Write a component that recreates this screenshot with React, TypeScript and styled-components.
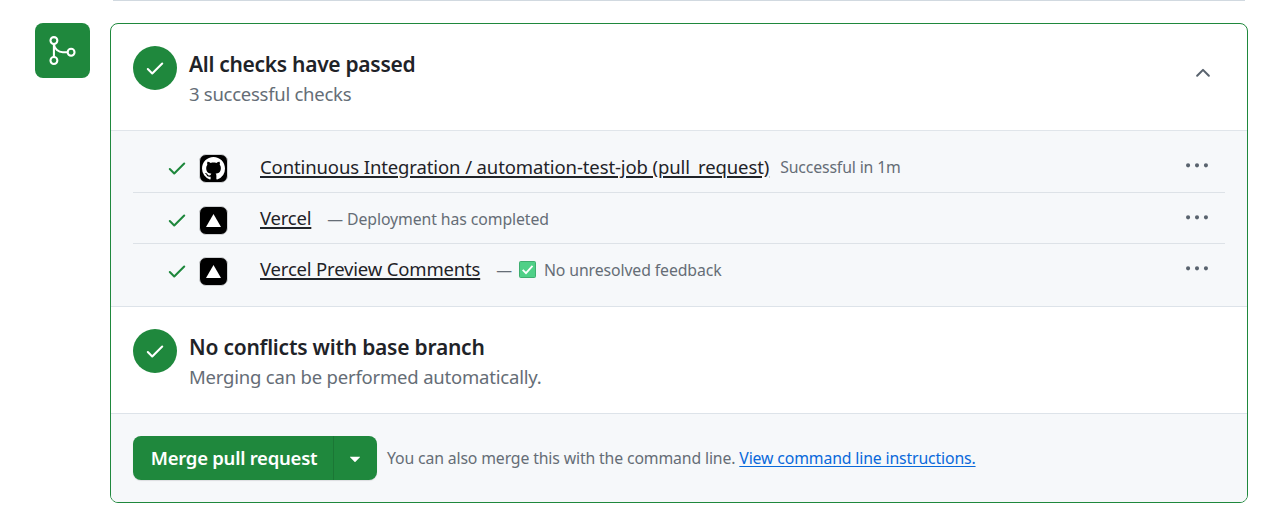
import React from "react";
import styled, { createGlobalStyle } from "styled-components";

const GlobalStyle = createGlobalStyle`
  * { box-sizing: border-box; }
  body {
    margin: 0;
    background: #fff;
    color: #1f2328;
    font-family: "Noto Sans", "Open Sans", sans-serif;
    overflow: hidden;
  }
  svg { display: block; flex: none; }
`;

const Page = styled.main`
  width: 1280px;
  height: 522px;
  display: flex;
  flex-direction: column;
`;

const PreviousCardEdge = styled.div`
  height: 1px;
  margin: 0 35px 0 113px;
  background: #d1d9e0;
`;

const MergeArea = styled.section`
  display: flex;
  align-items: flex-start;
  gap: 20px;
  padding: 22px 32px 0 35px;
`;

const MergeBadge = styled.div`
  width: 55px;
  height: 55px;
  border-radius: 8px;
  background: #1f883d;
  color: #fff;
  display: grid;
  place-items: center;
  flex: none;
`;

const Card = styled.div`
  flex: 1;
  height: 480px;
  border: 1px solid #1f883d;
  border-radius: 8px;
  overflow: hidden;
  background: #fff;
`;

const Status = styled.header<{ $height: number }>`
  display: flex;
  align-items: flex-start;
  height: ${(p) => p.$height}px;
  padding: 22px 33px 0 22px;
`;

const StatusCircle = styled.div`
  width: 44px;
  height: 44px;
  border-radius: 50%;
  background: #1f883d;
  color: #fff;
  display: grid;
  place-items: center;
  flex: none;
`;

const StatusText = styled.div`
  flex: 1;
  padding-left: 12px;
`;

const Title = styled.h3<{ $spacing: number }>`
  margin: 3px 0 0;
  font-size: 21px;
  font-weight: 600;
  line-height: 30px;
  letter-spacing: ${(p) => p.$spacing}px;
`;

const Subtitle = styled.p<{ $spacing: number }>`
  margin: 0;
  color: #656d76;
  font-size: 18.5px;
  line-height: 30px;
  letter-spacing: ${(p) => p.$spacing}px;
`;

const CollapseButton = styled.button`
  margin-top: 16px;
  padding: 0;
  border: 0;
  background: none;
  color: #59636e;
`;

const Checks = styled.ul`
  list-style: none;
  margin: 0;
  height: 177px;
  padding: 10px 22px 0;
  background: #f6f8fa;
  border-top: 1px solid #e0e5ea;
  border-bottom: 1px solid #dde3e9;
`;

const CheckRow = styled.li`
  display: flex;
  align-items: center;
  height: 51px;
  & + & { border-top: 1px solid #dde2e7; }
`;

const CheckMark = styled.span`
  padding: 3px 0 0 33px;
  color: #1f883d;
`;

const Avatar = styled.span`
  width: 29px;
  height: 29px;
  margin: 4px 32px 0 11px;
  border: 1px solid #d0d2d4;
  border-radius: 7px;
  background: #000;
  color: #fff;
  display: grid;
  place-items: center;
  flex: none;
`;

const CheckLink = styled.a<{ $spacing: number }>`
  color: #1f2328;
  font-size: 18.5px;
  line-height: 28px;
  letter-spacing: ${(p) => p.$spacing}px;
  text-decoration: underline;
  text-decoration-thickness: 1.5px;
  text-underline-offset: 2px;
  white-space: nowrap;
`;

const Detail = styled.span<{ $gap: number; $spacing: number }>`
  display: flex;
  align-items: center;
  flex: 1;
  margin: 1px 0 0 ${(p) => p.$gap}px;
  color: #656d76;
  font-size: 15.8px;
  line-height: 24px;
  letter-spacing: ${(p) => p.$spacing}px;
  white-space: pre;
`;

const EmojiSlot = styled.span`
  margin: 0 8px 0 7px;
`;

const MenuButton = styled.button`
  padding: 0;
  margin: 0 17px 1px 0;
  border: 0;
  background: none;
  color: #59636e;
`;

const Footer = styled.footer`
  display: flex;
  align-items: flex-start;
  height: 90px;
  padding: 22px;
  background: #f6f8fa;
  border-top: 1px solid #dde3e9;
`;

const ButtonGroup = styled.div`
  display: flex;
  width: 244px;
  height: 44px;
  border-radius: 8px;
  background: #1f883d;
  box-shadow: 0 1px 1px rgba(31, 35, 40, 0.12);
`;

const MergeButton = styled.button`
  width: 201px;
  padding: 0 0 0 2px;
  border: 0;
  border-right: 1px solid #1b7735;
  background: none;
  color: #fff;
  font: 600 18.5px/44px "Noto Sans", "Open Sans", sans-serif;
  letter-spacing: -0.25px;
  white-space: nowrap;
`;

const MethodButton = styled.button`
  flex: 1;
  display: grid;
  place-items: center;
  padding: 0 1px 0 0;
  border: 0;
  background: none;
  color: #fff;
`;

const Hint = styled.p`
  margin: 0 0 0 10px;
  color: #656d76;
  font-size: 15.8px;
  line-height: 45px;
  letter-spacing: -0.14px;
  white-space: nowrap;
`;

const HintLink = styled.a`
  color: #0969da;
  text-decoration: underline;
  text-underline-offset: 2px;
`;

const Octicon = ({ d, size = 22 }: { d: string; size?: number }) => (
  <svg width={size} height={size} viewBox="0 0 16 16" fill="currentColor" aria-hidden="true">
    <path d={d} />
  </svg>
);

const checkPath =
  "M13.78 4.22a.75.75 0 0 1 0 1.06l-7.25 7.25a.75.75 0 0 1-1.06 0L2.22 9.28a.751.751 0 0 1 .018-1.042.751.751 0 0 1 1.042-.018L6 10.94l6.72-6.72a.75.75 0 0 1 1.06 0Z";
const chevronUpPath =
  "M3.22 10.53a.749.749 0 0 1 0-1.06l4.25-4.25a.749.749 0 0 1 1.06 0l4.25 4.25a.749.749 0 1 1-1.06 1.06L8 6.811 4.28 10.53a.749.749 0 0 1-1.06 0Z";
const kebabPath =
  "M8 9a1.5 1.5 0 1 0 0-3 1.5 1.5 0 0 0 0 3ZM1.5 9a1.5 1.5 0 1 0 0-3 1.5 1.5 0 0 0 0 3Zm13 0a1.5 1.5 0 1 0 0-3 1.5 1.5 0 0 0 0 3Z";
const trianglePath =
  "m4.427 7.427 3.396 3.396a.25.25 0 0 0 .354 0l3.396-3.396A.25.25 0 0 0 11.396 7H4.604a.25.25 0 0 0-.177.427Z";
const githubPath =
  "M8 0c4.42 0 8 3.58 8 8a8.013 8.013 0 0 1-5.45 7.59c-.4.08-.55-.17-.55-.38 0-.27.01-1.13.01-2.2 0-.75-.25-1.23-.54-1.48 1.78-.2 3.65-.88 3.65-3.95 0-.88-.31-1.59-.82-2.15.08-.2.36-1.02-.08-2.12 0 0-.67-.22-2.2.82-.64-.18-1.32-.27-2-.27-.68 0-1.36.09-2 .27-1.53-1.03-2.2-.82-2.2-.82-.44 1.1-.16 1.92-.08 2.12-.51.56-.82 1.28-.82 2.15 0 3.06 1.86 3.75 3.64 3.95-.23.2-.44.55-.51 1.07-.46.21-1.61.55-2.33-.66-.15-.24-.6-.83-1.23-.82-.67.01-.27.38.01.53.34.19.73.9.82 1.13.16.45.68 1.31 2.69.94 0 .67.01 1.3.01 1.49 0 .21-.15.45-.55.38A7.995 7.995 0 0 1 0 8c0-4.42 3.58-8 8-8Z";

const MergeIcon = () => (
  <svg width="33" height="33" viewBox="0 0 24 24" fill="none" stroke="currentColor" strokeWidth="1.5" aria-hidden="true">
    <circle cx="5.75" cy="4.75" r="2.5" />
    <circle cx="5.75" cy="19.25" r="2.5" />
    <circle cx="18.25" cy="13.25" r="2.5" />
    <path d="M5.75 7.25v9.5M5.75 7.5c.5 3.4 3.2 5.75 6.5 5.75h3.5" />
  </svg>
);

const VercelMark = () => (
  <svg width="15" height="13" viewBox="0 0 15 13" fill="currentColor" aria-hidden="true">
    <path d="M7.5 0 15 13H0Z" />
  </svg>
);

const GreenCheckEmoji = () => (
  <svg width="17" height="17" viewBox="0 0 17 17" role="img" aria-label="passed">
    <rect x="0.5" y="0.5" width="16" height="16" rx="1" fill="#4fd087" stroke="#3fae70" />
    <path d="m3.7 8.8 3.3 3.4 6.5-7.3" fill="none" stroke="#fff" strokeWidth="1.8" />
  </svg>
);

const checks = [
  { name: "Continuous Integration / automation-test-job (pull_request)", spacing: -0.11, gap: 11, detail: "Successful in 1m", detailSpacing: -0.14, github: true },
  { name: "Vercel", spacing: -0.2, gap: 16, detail: "— Deployment has completed", detailSpacing: -0.09 },
  { name: "Vercel Preview Comments", spacing: -0.18, gap: 16, detail: "No unresolved feedback", detailSpacing: -0.1, emoji: true },
];

export default function App() {
  return (
    <Page>
      <GlobalStyle />
      <PreviousCardEdge />
      <MergeArea>
        <MergeBadge><MergeIcon /></MergeBadge>
        <Card>
          <Status $height={106}>
            <StatusCircle><Octicon d={checkPath} /></StatusCircle>
            <StatusText>
              <Title $spacing={-0.3}>All checks have passed</Title>
              <Subtitle $spacing={-0.27}>3 successful checks</Subtitle>
            </StatusText>
            <CollapseButton aria-label="Collapse checks"><Octicon d={chevronUpPath} /></CollapseButton>
          </Status>
          <Checks>
            {checks.map((c) => (
              <CheckRow key={c.name}>
                <CheckMark><Octicon d={checkPath} /></CheckMark>
                <Avatar>{c.github ? <Octicon d={githubPath} size={23} /> : <VercelMark />}</Avatar>
                <CheckLink $spacing={c.spacing}>{c.name}</CheckLink>
                <Detail $gap={c.gap} $spacing={c.detailSpacing}>
                  {c.emoji && <>—<EmojiSlot><GreenCheckEmoji /></EmojiSlot></>}
                  {c.detail}
                </Detail>
                <MenuButton aria-label="Check actions"><Octicon d={kebabPath} /></MenuButton>
              </CheckRow>
            ))}
          </Checks>
          <Status $height={106}>
            <StatusCircle><Octicon d={checkPath} /></StatusCircle>
            <StatusText>
              <Title $spacing={-0.23}>No conflicts with base branch</Title>
              <Subtitle $spacing={-0.2}>Merging can be performed automatically.</Subtitle>
            </StatusText>
          </Status>
          <Footer>
            <ButtonGroup>
              <MergeButton>Merge pull request</MergeButton>
              <MethodButton aria-label="Select merge method"><Octicon d={trianglePath} /></MethodButton>
            </ButtonGroup>
            <Hint>
              You can also merge this with the command line. <HintLink>View command line instructions.</HintLink>
            </Hint>
          </Footer>
        </Card>
      </MergeArea>
    </Page>
  );
}
